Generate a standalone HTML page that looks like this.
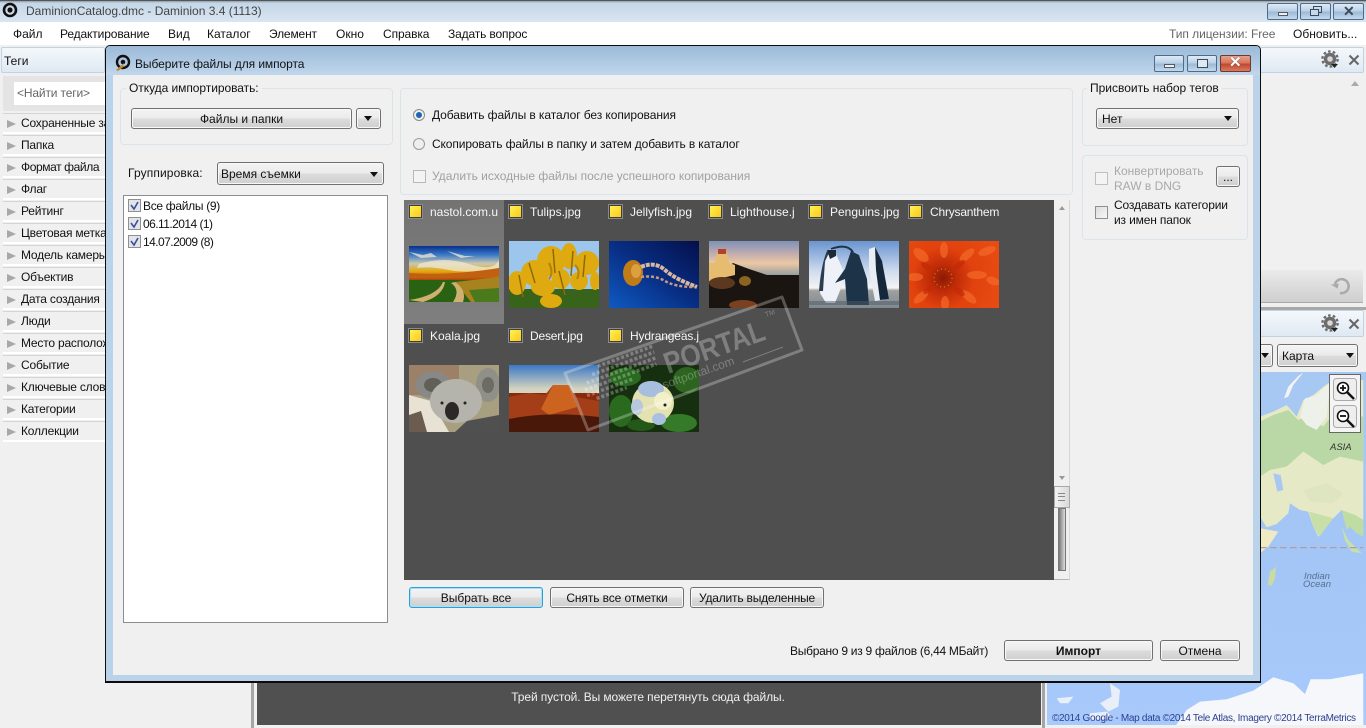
<!DOCTYPE html>
<html lang="ru"><head><meta charset="utf-8"><title>Daminion</title>
<style>
*{box-sizing:border-box}
html,body{margin:0;padding:0;width:1366px;height:728px;overflow:hidden;background:#f0f0f0}
body{position:relative;font:12px "Liberation Sans","Noto Sans CJK SC",sans-serif;color:#111}
.a,.t,.b,.g,.cb{position:absolute}
.t{white-space:nowrap;line-height:16px}
.l{letter-spacing:-.2px;left:21px}
.b{border:1px solid #707070;border-radius:3px;background:linear-gradient(#f4f4f4 0,#ebebeb 48%,#dcdcdc 52%,#cfcfcf 100%);text-align:center;line-height:20px;box-shadow:inset 0 0 0 1px #f8f8f8;white-space:nowrap}
.g{border:1px solid #dbe4ea;border-radius:4px}
.ar{position:absolute;width:0;height:0;border-left:4.5px solid transparent;border-right:4.5px solid transparent;border-top:5px solid #111}
.cb{width:13px;height:13px;border:1px solid #8e8f8f;background:linear-gradient(135deg,#dcdcdc,#f8f8f8)}
.side{position:absolute;left:3px;width:102px;height:21px;border-bottom:2px solid #fff;box-shadow:0 1px 0 #d4d4d4 inset;}
.tri{position:absolute;left:4px;top:7px;width:0;height:0;border-top:4.5px solid transparent;border-bottom:4.5px solid transparent;border-left:9px solid #a8a8a8}
.y{position:absolute;width:15px;height:15px;border:1px solid #8a8a8a;background:#3f3f3f;padding:1px}
.y i{display:block;width:11px;height:11px;background:linear-gradient(135deg,#fff25a,#ffd92e 60%,#f7c82a)}
.wb{position:absolute;height:17px;border:1px solid #4c6c8c;border-radius:2px;background:linear-gradient(#dfeaf5,#b8cfe6 50%,#9bb8d6 52%,#c6d9ec)}
.fn{position:absolute;color:#f6f6f6;line-height:16px;white-space:nowrap;overflow:hidden}
svg{position:absolute;display:block}
</style></head><body>

<!-- main window title -->
<div class="a" style="left:0;top:0;width:1366px;height:22px;background:linear-gradient(#8f9aa6 0,#c4d6e8 2px,#d9e5f1 100%);border-top:1px solid #555"></div>
<svg style="left:2px;top:2px" width="18" height="18" viewBox="0 0 18 18"><circle cx="8" cy="8" r="6" fill="none" stroke="#111" stroke-width="2.6"/><circle cx="8" cy="8" r="2.6" fill="#111"/></svg>
<div class="t" style="left:26px;top:3px;font-size:12px;color:#444">DaminionCatalog.dmc - Daminion 3.4 (1113)</div>
<div class="wb" style="left:1267px;top:3px;width:31px"><div class="a" style="left:10px;top:8px;width:10px;height:4px;background:#eee;border:1px solid #4d5b6b"></div></div>
<div class="wb" style="left:1300px;top:3px;width:31px"><div class="a" style="left:12px;top:2px;width:9px;height:7px;border:1.5px solid #3c4a5a"></div><div class="a" style="left:9px;top:5px;width:9px;height:7px;border:1.5px solid #3c4a5a;background:#c6d9ec"></div></div>
<div class="wb" style="left:1333px;top:3px;width:31px"><div class="t" style="left:9px;top:-1px;font-weight:bold;font-size:14px;color:#3d4b5c">✕</div></div>

<!-- menu -->
<div class="a" style="left:0;top:22px;width:1366px;height:23px;background:#fff"></div>
<div class="t" style="left:13px;top:26px">Файл</div>
<div class="t" style="left:60px;top:26px;letter-spacing:-.13px">Редактирование</div>
<div class="t" style="left:168px;top:26px">Вид</div>
<div class="t" style="left:207px;top:26px">Каталог</div>
<div class="t" style="left:269px;top:26px;letter-spacing:-.15px">Элемент</div>
<div class="t" style="left:336px;top:26px">Окно</div>
<div class="t" style="left:383px;top:26px;letter-spacing:-.1px">Справка</div>
<div class="t" style="left:448px;top:26px;letter-spacing:-.15px">Задать вопрос</div>
<div class="t" style="left:1169px;top:26px;color:#666;letter-spacing:-.05px">Тип лицензии: Free</div>
<div class="t" style="left:1293px;top:26px">Обновить...</div>

<!-- left panel -->
<div class="a" style="left:1px;top:47px;width:104px;height:26px;background:linear-gradient(#f4f8fb,#dfe9f3);border:1px solid #c3d2e1;border-radius:2px"></div>
<div class="t" style="left:4px;top:53px">Теги</div>
<div class="a" style="left:3px;top:76px;width:102px;height:35px;background:#e4e4e4"></div>
<div class="a" style="left:14px;top:82px;width:91px;height:23px;background:#fff"></div>
<div class="t" style="left:17px;top:85px;color:#666;letter-spacing:-.15px">&lt;Найти теги&gt;</div>
<div class="side" style="top:113px"><div class="tri"></div></div><div class="t l" style="top:115px;width:84px;overflow:hidden">Сохраненные запросы</div>
<div class="side" style="top:135px"><div class="tri"></div></div><div class="t l" style="top:137px">Папка</div>
<div class="side" style="top:157px"><div class="tri"></div></div><div class="t l" style="top:159px;letter-spacing:-.4px">Формат файла</div>
<div class="side" style="top:179px"><div class="tri"></div></div><div class="t l" style="top:181px">Флаг</div>
<div class="side" style="top:201px"><div class="tri"></div></div><div class="t l" style="top:203px">Рейтинг</div>
<div class="side" style="top:223px"><div class="tri"></div></div><div class="t l" style="top:225px;width:84px;overflow:hidden">Цветовая метка</div>
<div class="side" style="top:245px"><div class="tri"></div></div><div class="t l" style="top:247px;width:84px;overflow:hidden">Модель камеры</div>
<div class="side" style="top:267px"><div class="tri"></div></div><div class="t l" style="top:269px">Объектив</div>
<div class="side" style="top:289px"><div class="tri"></div></div><div class="t l" style="top:291px">Дата создания</div>
<div class="side" style="top:311px"><div class="tri"></div></div><div class="t l" style="top:313px">Люди</div>
<div class="side" style="top:333px"><div class="tri"></div></div><div class="t l" style="top:335px;width:84px;overflow:hidden">Место расположения</div>
<div class="side" style="top:355px"><div class="tri"></div></div><div class="t l" style="top:357px">Событие</div>
<div class="side" style="top:377px"><div class="tri"></div></div><div class="t l" style="top:379px;width:84px;overflow:hidden">Ключевые слова</div>
<div class="side" style="top:399px"><div class="tri"></div></div><div class="t l" style="top:401px">Категории</div>
<div class="side" style="top:421px"><div class="tri"></div></div><div class="t l" style="top:423px">Коллекции</div>

<!-- bottom center -->
<div class="a" style="left:251px;top:682px;width:3px;height:46px;background:#a5a5a5"></div>
<div class="a" style="left:257px;top:682px;width:784px;height:43px;background:#505050"></div>
<div class="t" style="left:257px;top:689px;width:784px;text-align:center;color:#f0f0f0;letter-spacing:-.1px;padding-right:2px">Трей пустой. Вы можете перетянуть сюда файлы.</div>
<div class="a" style="left:1042px;top:682px;width:3px;height:46px;background:#a5a5a5"></div>

<!-- right top panel -->
<div class="a" style="left:1260px;top:47px;width:104px;height:26px;background:linear-gradient(#f4f8fb,#dfe9f3);border:1px solid #c3d2e1;border-radius:2px"></div>
<svg style="left:1321px;top:50px" width="18" height="19" viewBox="0 0 18 19"><circle cx="9" cy="9" r="6.2" fill="#6c6c6c"/><circle cx="9" cy="9" r="7.6" fill="none" stroke="#6c6c6c" stroke-width="2.4" stroke-dasharray="2.6 2.2"/><circle cx="9" cy="9" r="2.8" fill="#d8d8d8"/><path d="M10 14h7l-3.5 4z" fill="#222"/></svg>
<svg style="left:1348px;top:54px" width="12" height="12" viewBox="0 0 12 12"><path d="M1.5 1.5l9 9M10.5 1.5l-9 9" stroke="#666" stroke-width="2"/></svg>
<div class="a" style="left:1351px;top:81px;width:0;height:0;border-left:4px solid transparent;border-right:4px solid transparent;border-bottom:5px solid #aaa"></div>
<div class="a" style="left:1260px;top:270px;width:103px;height:33px;background:linear-gradient(#eaeaea,#cfcfcf);border-bottom:1px solid #aaa"></div>
<svg style="left:1330px;top:276px" width="22" height="20" viewBox="0 0 22 20"><path d="M5 8a7 7 0 1 1 5 9" fill="none" stroke="#aaa" stroke-width="2.5"/><path d="M1 8h8l-2 5z" fill="#aaa" transform="rotate(-8 5 9)"/></svg>
<div class="a" style="left:1260px;top:307px;width:106px;height:3px;background:#a8a8a8"></div>
<div class="a" style="left:1260px;top:310px;width:104px;height:27px;background:linear-gradient(#f4f8fb,#dfe9f3);border:1px solid #c3d2e1;border-radius:2px"></div>
<svg style="left:1321px;top:314px" width="18" height="19" viewBox="0 0 18 19"><circle cx="9" cy="9" r="6.2" fill="#6c6c6c"/><circle cx="9" cy="9" r="7.6" fill="none" stroke="#6c6c6c" stroke-width="2.4" stroke-dasharray="2.6 2.2"/><circle cx="9" cy="9" r="2.8" fill="#d8d8d8"/><path d="M10 14h7l-3.5 4z" fill="#222"/></svg>
<svg style="left:1348px;top:318px" width="12" height="12" viewBox="0 0 12 12"><path d="M1.5 1.5l9 9M10.5 1.5l-9 9" stroke="#666" stroke-width="2"/></svg>
<div class="b" style="left:1240px;top:344px;width:33px;height:23px"><div class="ar" style="left:20px;top:8px"></div></div>
<div class="b" style="left:1277px;top:344px;width:81px;height:23px;text-align:left;padding-left:4px;line-height:23px">Карта<div class="ar" style="left:68px;top:8px"></div></div>

<!-- map -->
<svg style="left:1047px;top:372px" width="319" height="356" viewBox="1047 372 319 356">
<defs><linearGradient id="sea" x1="0" y1="0" x2="0" y2="1"><stop offset="0" stop-color="#a6c8f2"/><stop offset=".5" stop-color="#a3c6f6"/><stop offset="1" stop-color="#a8c9fb"/></linearGradient></defs>
<rect x="1047" y="372" width="319" height="356" fill="url(#sea)"/>
<g transform="translate(1040 270) scale(.3333)">
<path d="M660 440L700 425 740 405 770 440 790 390 820 375 850 350 880 330H970V750L945 735 920 745 905 720 880 745 860 762 835 800 820 770 805 725 780 720 750 700 745 730 710 762 680 772 660 740Z" fill="#e6e9c6"/>
<path d="M660 455L700 435 745 420 775 450 800 440 850 470 880 430 970 440V575L900 560 850 585 790 545 740 590 690 600 660 620Z" fill="#bad8a6"/>
<path d="M780 440L795 385 825 378 850 355 870 340 860 440 830 480 800 465Z" fill="#eef0ea"/>
<path d="M732 385L745 350 775 318 790 308 760 345 745 380Z" fill="#f2f3f2"/>
<path d="M700 610L722 615 730 660 712 665Z" fill="#a8c8f2"/>
<path d="M790 660L860 640 910 670 880 700 810 695Z" fill="#dfe5c0"/>
<path d="M905 720L945 735 970 750V800L950 790 930 770 920 780Z" fill="#bfdda2"/>
<path d="M808 725L880 745 838 800 820 770Z" fill="#c8e0a8"/>
<path d="M660 775L715 785 685 830 660 850Z" fill="#efe9c4"/>
<path d="M905 770L925 810 965 850 935 845 915 810Z" fill="#c8e0a8"/>
<path d="M683 945L690 905 708 890 705 925 695 948Z" fill="#c9dba2"/>
<path d="M660 833H970" stroke="#b29ca2" stroke-width="4" stroke-dasharray="20 10"/>
<path d="M405 1370L440 1320 480 1295 560 1288 640 1262 700 1222 760 1240 795 1272 812 1228 870 1228 970 1210V1370Z" fill="#f5f7fa"/>
<path d="M210 1240L240 1260 235 1310 205 1325 180 1300 215 1280ZM50 1285L100 1280 85 1300 60 1300ZM150 1330L200 1325 220 1345 150 1350Z" fill="#e8eff9"/>
</g>
<text x="1330" y="450" font-family="Liberation Sans" font-size="9.5" font-style="italic" fill="#333">ASIA</text>
<text x="1304" y="579" font-family="Liberation Sans" font-size="9.5" font-style="italic" fill="#56708f">Indian</text>
<text x="1303" y="587" font-family="Liberation Sans" font-size="9.5" font-style="italic" fill="#56708f">Ocean</text>
<text x="1052" y="721" font-family="Liberation Sans" font-size="10" fill="#2c3f8f" textLength="304">©2014 Google - Map data ©2014 Tele Atlas, Imagery ©2014 TerraMetrics</text>
</svg>
<div class="a" style="left:1047px;top:725px;width:319px;height:3px;background:#f0f0f0"></div>
<div class="a" style="left:1329px;top:374px;width:32px;height:59px;background:#f4f4f4;border:1px solid #666"></div>
<svg style="left:1333px;top:378px" width="25" height="52" viewBox="0 0 25 52"><rect x=".5" y=".5" width="23" height="22" rx="3" fill="#eee" stroke="#aaa"/><rect x=".5" y="27.5" width="23" height="22" rx="3" fill="#eee" stroke="#aaa"/><circle cx="10" cy="10" r="5.5" fill="#fff" stroke="#111" stroke-width="1.6"/><path d="M14 14l7 7" stroke="#111" stroke-width="2.4"/><path d="M7 10h6M10 7v6" stroke="#111" stroke-width="1.8"/><circle cx="10" cy="38" r="5.5" fill="#fff" stroke="#111" stroke-width="1.6"/><path d="M14 42l7 7" stroke="#111" stroke-width="2.4"/><path d="M7 38h6" stroke="#111" stroke-width="1.8"/></svg>

<!-- dialog -->
<div class="a" style="left:105px;top:45px;width:1156px;height:638px;background:#bad2ea;border:1px solid #0c0c0c;border-radius:5px 5px 0 0;border-bottom-width:2px"></div>
<div class="a" style="left:106px;top:46px;width:1154px;height:29px;background:linear-gradient(#9cbad6,#a9c5e0 40%,#c0d6ec);border-radius:4px 4px 0 0"></div>
<div class="a" style="left:113px;top:75px;width:1140px;height:600px;background:#f0f0f0"></div>
<svg style="left:114px;top:54px" width="18" height="18" viewBox="0 0 18 18"><circle cx="9" cy="8" r="6" fill="none" stroke="#111" stroke-width="2.4"/><circle cx="9" cy="8" r="2.3" fill="#111"/><path d="M2 16l8-7-1 3 3-1-8 6z" fill="#c28a2c"/></svg>
<div class="t" style="left:135px;top:56px;color:#111;letter-spacing:-.08px">Выберите файлы для импорта</div>
<div class="wb" style="left:1154px;top:55px;width:30px"><div class="a" style="left:9px;top:8px;width:11px;height:4px;background:#eee;border:1px solid #4d5b6b"></div></div>
<div class="wb" style="left:1187px;top:55px;width:30px"><div class="a" style="left:9px;top:3px;width:11px;height:9px;border:1.5px solid #3c4a5a;background:#dde8f3"></div></div>
<div class="wb" style="left:1220px;top:55px;width:31px;background:linear-gradient(#e9a08a,#d8765c 45%,#c24a2e 55%,#d87a60);border-color:#6b3a30"><div class="t" style="left:8px;top:-1px;font-weight:bold;font-size:15px;color:#fff;text-shadow:0 0 1px #333">✕</div></div>

<!-- source group -->
<div class="g" style="left:120px;top:88px;width:273px;height:57px"></div>
<div class="t" style="left:126px;top:80px;background:#f0f0f0;padding:0 3px;letter-spacing:-.05px">Откуда импортировать:</div>
<div class="b" style="left:131px;top:108px;width:221px;height:21px">Файлы и папки</div>
<div class="b" style="left:356px;top:108px;width:25px;height:21px"><div class="ar" style="left:7px;top:7px"></div></div>
<div class="t" style="left:128px;top:165px;letter-spacing:.12px">Группировка:</div>
<div class="b" style="left:217px;top:162px;width:167px;height:23px;text-align:left;padding-left:3px;line-height:23px">Время съемки<div class="ar" style="left:152px;top:9px"></div></div>

<!-- tree -->
<div class="a" style="left:123px;top:195px;width:265px;height:428px;background:#fff;border:1px solid #8a8e94"></div>
<svg style="left:128px;top:199px" width="14" height="52" viewBox="0 0 14 52"><g fill="#e2e4ea" stroke="#8e8f8f"><rect x=".5" y=".5" width="12" height="12"/><rect x=".5" y="18.5" width="12" height="12"/><rect x=".5" y="36.5" width="12" height="12"/></g><g fill="none" stroke="#3b4f9b" stroke-width="1.6"><path d="M3 6l3 4 4-7"/><path d="M3 24l3 4 4-7"/><path d="M3 42l3 4 4-7"/></g></svg>
<div class="t" style="left:143px;top:198px;letter-spacing:-.3px">Все файлы (9)</div>
<div class="t" style="left:143px;top:216px;letter-spacing:-.55px">06.11.2014 (1)</div>
<div class="t" style="left:143px;top:234px;letter-spacing:-.55px">14.07.2009 (8)</div>

<!-- options group -->
<div class="g" style="left:400px;top:88px;width:673px;height:107px"></div>
<svg style="left:412px;top:108px" width="14" height="44" viewBox="0 0 14 44"><circle cx="7" cy="7" r="5.5" fill="#eee" stroke="#8b8b8b"/><circle cx="7" cy="7" r="3" fill="#1e64b4"/><circle cx="7" cy="36" r="5.5" fill="#eee" stroke="#9a9a9a"/></svg>
<div class="t" style="left:432px;top:107px;letter-spacing:-.08px">Добавить файлы в каталог без копирования</div>
<div class="t" style="left:432px;top:136px;letter-spacing:-.12px">Скопировать файлы в папку и затем добавить в каталог</div>
<div class="cb" style="left:413px;top:170px;background:#f4f4f4;border-color:#b8b8b8"></div>
<div class="t" style="left:432px;top:168px;color:#a0a0a0">Удалить исходные файлы после успешного копирования</div>

<!-- right groups -->
<div class="g" style="left:1082px;top:88px;width:166px;height:58px"></div>
<div class="t" style="left:1087px;top:80px;background:#f0f0f0;padding:0 3px">Присвоить набор тегов</div>
<div class="b" style="left:1096px;top:108px;width:143px;height:21px;text-align:left;padding-left:5px">Нет<div class="ar" style="left:127px;top:7px"></div></div>
<div class="g" style="left:1082px;top:155px;width:166px;height:85px"></div>
<div class="cb" style="left:1095px;top:172px;background:#f4f4f4;border-color:#c0c0c0"></div>
<div class="t" style="left:1114px;top:163px;color:#a8a8a8">Конвертировать</div>
<div class="t" style="left:1114px;top:178px;color:#a8a8a8">RAW в DNG</div>
<div class="b" style="left:1216px;top:166px;width:24px;height:21px;line-height:21px">...</div>
<div class="cb" style="left:1095px;top:206px"></div>
<div class="t" style="left:1114px;top:197px;letter-spacing:-.15px">Создавать категории</div>
<div class="t" style="left:1114px;top:212px;letter-spacing:-.15px">из имен папок</div>

<!-- dark grid -->
<div class="a" style="left:404px;top:200px;width:650px;height:380px;background:#4f4f4f"></div>
<div class="a" style="left:404px;top:200px;width:100px;height:124px;background:linear-gradient(#737373,#7f7f7f)"></div>

<div class="y" style="left:408px;top:204px"><i></i></div><div class="fn" style="left:430px;top:204px;width:70px">nastol.com.u</div>
<div class="y" style="left:508px;top:204px"><i></i></div><div class="fn" style="left:530px;top:204px;width:70px">Tulips.jpg</div>
<div class="y" style="left:608px;top:204px"><i></i></div><div class="fn" style="left:630px;top:204px;width:70px">Jellyfish.jpg</div>
<div class="y" style="left:708px;top:204px"><i></i></div><div class="fn" style="left:730px;top:204px;width:70px">Lighthouse.j</div>
<div class="y" style="left:808px;top:204px"><i></i></div><div class="fn" style="left:830px;top:204px;width:70px">Penguins.jpg</div>
<div class="y" style="left:908px;top:204px"><i></i></div><div class="fn" style="left:930px;top:204px;width:72px;letter-spacing:-.2px">Chrysanthem</div>
<div class="y" style="left:408px;top:328px"><i></i></div><div class="fn" style="left:430px;top:328px;width:70px">Koala.jpg</div>
<div class="y" style="left:508px;top:328px"><i></i></div><div class="fn" style="left:530px;top:328px;width:70px;letter-spacing:-.2px">Desert.jpg</div>
<div class="y" style="left:608px;top:328px"><i></i></div><div class="fn" style="left:630px;top:328px;width:70px;letter-spacing:-.15px">Hydrangeas.j</div>

<!-- thumbnails -->
<svg style="left:409px;top:246px" width="90" height="56" viewBox="0 0 90 56"><defs><linearGradient id="s1" x1="0" y1="0" x2="0" y2="1"><stop offset="0" stop-color="#08308c"/><stop offset=".25" stop-color="#3a78c8"/><stop offset=".5" stop-color="#c8c8b0"/><stop offset=".72" stop-color="#e4a810"/><stop offset="1" stop-color="#a83808"/></linearGradient></defs><rect width="90" height="35" fill="url(#s1)"/><path d="M0 6l14 3 8-2 6 4-16 1zM38 5l18 5 10 0-14 2zM10 18q25-8 50 0t30-4v8q-30 6-50 2T8 22z" fill="#f0ead0" opacity=".75"/><path d="M0 27Q40 30 90 22V30Q40 33 0 32Z" fill="#c06010"/><rect y="34" width="90" height="22" fill="#2a6214"/><path d="M46 36L90 31V56H62z" fill="#a8821e"/><path d="M60 44L90 42V56H66Z" fill="#4a7a1c"/><path d="M0 54Q28 50 34 36L36 36Q34 50 14 56ZM44 56Q52 44 42 37L46 36Q58 44 54 56Z" fill="#d0b070"/></svg>

<svg style="left:509px;top:241px" width="90" height="67" viewBox="0 0 90 67"><rect width="90" height="67" fill="#9cc6ec"/><rect y="48" width="90" height="19" fill="#37641a"/><g fill="#deaa10"><ellipse cx="42" cy="20" rx="14" ry="15"/><ellipse cx="60" cy="15" rx="8" ry="13"/><ellipse cx="78" cy="22" rx="12" ry="12"/><ellipse cx="26" cy="32" rx="14" ry="13"/><ellipse cx="8" cy="42" rx="9" ry="12"/><ellipse cx="34" cy="46" rx="12" ry="9"/><ellipse cx="70" cy="40" rx="9" ry="9"/><ellipse cx="86" cy="40" rx="5" ry="9"/><ellipse cx="52" cy="38" rx="9" ry="10"/><ellipse cx="42" cy="60" rx="11" ry="7"/></g><path d="M44 8l2 24M20 22l6 20M64 10l-2 25M50 30l6 24M10 34l4 22M76 14l-2 22" stroke="#926806" stroke-width="1.5" fill="none"/><path d="M40 22q5 10 0 16M66 24q6 6 2 14" stroke="#b48208" stroke-width="2" fill="none"/></svg>

<svg style="left:609px;top:241px" width="90" height="67" viewBox="0 0 90 67"><defs><linearGradient id="j" x1="0" y1="1" x2="1" y2="0"><stop offset="0" stop-color="#0f5ac2"/><stop offset=".5" stop-color="#082e84"/><stop offset="1" stop-color="#050f4a"/></linearGradient></defs><rect width="90" height="67" fill="url(#j)"/><ellipse cx="24" cy="32" rx="10" ry="13" fill="#c07c18"/><ellipse cx="27" cy="30" rx="5" ry="7" fill="#dda040"/><path d="M32 26q14-6 24 3t32 17" stroke="#d8b8a0" stroke-width="4" fill="none" stroke-dasharray="4 1"/><path d="M32 36q14-2 24 4t30 6" stroke="#c89880" stroke-width="2.5" fill="none" stroke-dasharray="3 2"/></svg>

<svg style="left:709px;top:241px" width="90" height="67" viewBox="0 0 90 67"><defs><linearGradient id="l" x1="0" y1="0" x2="0" y2="1"><stop offset="0" stop-color="#7e92b8"/><stop offset=".3" stop-color="#b8a8b0"/><stop offset=".62" stop-color="#ecc8a4"/><stop offset="1" stop-color="#8898a0"/></linearGradient></defs><rect width="90" height="36" fill="url(#l)"/><path d="M0 42L24 22 40 28 58 34 90 34V67H0Z" fill="#1a1510"/><path d="M0 22H6L8 12 18 12 20 22 26 24V34L0 40Z" fill="#e6bc70"/><rect x="9" y="8" width="8" height="5" fill="#b4402c"/><ellipse cx="13" cy="42" rx="13" ry="6" fill="#5c3820"/><ellipse cx="36" cy="40" rx="6" ry="5" fill="#8a6420"/><ellipse cx="34" cy="64" rx="14" ry="5" fill="#7a4020"/></svg>

<svg style="left:809px;top:241px" width="90" height="67" viewBox="0 0 90 67"><defs><linearGradient id="p" x1="0" y1="0" x2="0" y2="1"><stop offset="0" stop-color="#6a94d0"/><stop offset=".45" stop-color="#cfdcee"/><stop offset=".7" stop-color="#f4f4f4"/><stop offset=".74" stop-color="#a0a0a0"/><stop offset="1" stop-color="#7e8a90"/></linearGradient></defs><rect width="90" height="67" fill="url(#p)"/><path d="M20 9q6-2 7 4l7 16-2 18-6 15H17L11 52l3-24z" fill="#eef2f8"/><path d="M18 10q-6 14-8 40l4 0 2-30 4-8z" fill="#2a3c52"/><path d="M18 9h9v6l-6 3z" fill="#1c2a38"/><path d="M22 8q16-6 22 3" stroke="#1c3348" stroke-width="2" fill="none"/><path d="M42 10l8 4 8 24 2 26H38l-2-26-10 4 10-14z" fill="#1c3348"/><path d="M60 8l6-2 6 14 8 38-14 2-6-32z" fill="#e8eef4"/><path d="M66 6l7 14 7 38-9 1-4-30z" fill="#14273b"/><rect y="60" width="90" height="4" fill="#4e5a66" opacity=".5"/></svg>

<svg style="left:909px;top:241px" width="90" height="67" viewBox="0 0 90 67"><defs><radialGradient id="c" gradientUnits="userSpaceOnUse" cx="34" cy="37" r="62"><stop offset="0" stop-color="#8a1a04"/><stop offset=".22" stop-color="#c02c08"/><stop offset=".5" stop-color="#e2420e"/><stop offset="1" stop-color="#e84c12"/></radialGradient></defs><rect width="90" height="67" fill="url(#c)"/><g fill="#f46a2a" opacity=".7"><ellipse cx="12" cy="14" rx="9" ry="5" transform="rotate(40 12 14)"/><ellipse cx="35" cy="9" rx="4" ry="8"/><ellipse cx="58" cy="14" rx="9" ry="4" transform="rotate(-40 58 14)"/><ellipse cx="78" cy="10" rx="9" ry="4" transform="rotate(-20 78 10)"/><ellipse cx="68" cy="34" rx="10" ry="4"/><ellipse cx="84" cy="40" rx="7" ry="4" transform="rotate(20 84 40)"/><ellipse cx="60" cy="56" rx="9" ry="4" transform="rotate(40 60 56)"/><ellipse cx="36" cy="62" rx="4" ry="7"/><ellipse cx="12" cy="56" rx="9" ry="4" transform="rotate(-40 12 56)"/><ellipse cx="6" cy="36" rx="8" ry="4"/></g><g fill="#c42a06" opacity=".7"><ellipse cx="50" cy="24" rx="7" ry="3" transform="rotate(-40 50 24)"/><ellipse cx="18" cy="26" rx="7" ry="3" transform="rotate(35 18 26)"/><ellipse cx="50" cy="50" rx="7" ry="3" transform="rotate(40 50 50)"/><ellipse cx="20" cy="48" rx="7" ry="3" transform="rotate(-40 20 48)"/></g><circle cx="34" cy="37" r="9" fill="none" stroke="#c88420" stroke-width="1.2" stroke-dasharray="1 3"/></svg>

<svg style="left:409px;top:365px" width="90" height="67" viewBox="0 0 90 67"><rect width="90" height="67" fill="#a89e80"/><path d="M0 0H50V30L0 30Z" fill="#9c8068"/><path d="M0 30L22 36 40 67H0Z" fill="#e8e2d4"/><path d="M0 50L12 46 18 67H0Z" fill="#6c5c50"/><path d="M58 56L90 50V67H46Z" fill="#505050"/><ellipse cx="24" cy="20" rx="18" ry="14" fill="#888884"/><ellipse cx="79" cy="20" rx="12" ry="17" fill="#909088"/><ellipse cx="24" cy="20" rx="9" ry="7" fill="#606058"/><ellipse cx="79" cy="20" rx="6" ry="8" fill="#6c6c64"/><ellipse cx="47" cy="36" rx="26" ry="22" fill="#b4b4ac"/><ellipse cx="43" cy="46" rx="7" ry="9" fill="#2c2828"/><circle cx="33" cy="38" r="1.5" fill="#222"/><circle cx="56" cy="38" r="1.5" fill="#222"/></svg>

<svg style="left:509px;top:365px" width="90" height="67" viewBox="0 0 90 67"><defs><linearGradient id="d" x1="0" y1="0" x2="0" y2="1"><stop offset="0" stop-color="#3c78c4"/><stop offset=".8" stop-color="#d4d4c0"/></linearGradient></defs><rect width="90" height="30" fill="url(#d)"/><rect y="28" width="90" height="39" fill="#8a2a0c"/><path d="M0 32L20 28 36 30 44 20 60 20 66 32 90 36V67H0Z" fill="#a43e18"/><path d="M44 20L60 20 68 42 40 50 32 44Z" fill="#cc6420"/><path d="M0 54Q40 46 90 52V67H0Z" fill="#4a1808"/></svg>

<svg style="left:609px;top:365px" width="90" height="67" viewBox="0 0 90 67"><rect width="90" height="67" fill="#16300f"/><ellipse cx="16" cy="12" rx="16" ry="9" fill="#2a6a20"/><ellipse cx="78" cy="15" rx="14" ry="13" fill="#2c6420"/><ellipse cx="12" cy="46" rx="12" ry="16" fill="#2a6a1e"/><ellipse cx="70" cy="58" rx="18" ry="9" fill="#347a28"/><ellipse cx="32" cy="60" rx="14" ry="6" fill="#245818"/><ellipse cx="44" cy="38" rx="21" ry="20" fill="#e4e2b0"/><ellipse cx="42" cy="24" rx="13" ry="8" fill="#a8bede"/><ellipse cx="50" cy="54" rx="7" ry="6" fill="#aac0e0"/><ellipse cx="28" cy="42" rx="6" ry="8" fill="#b8c8dc"/><ellipse cx="54" cy="36" rx="9" ry="9" fill="#f2f0c8"/><circle cx="56" cy="40" r="1.5" fill="#222"/></svg>

<!-- scrollbar -->
<div class="a" style="left:1054px;top:200px;width:16px;height:380px;background:#f0f0f0;border-right:1px solid #d8d8d8;border-bottom:1px solid #b4b4b4"></div>
<div class="a" style="left:1059px;top:206px;width:0;height:0;border-left:3.5px solid transparent;border-right:3.5px solid transparent;border-bottom:4px solid #9a9a9a"></div>
<div class="a" style="left:1059px;top:476px;width:0;height:0;border-left:3.5px solid transparent;border-right:3.5px solid transparent;border-top:4px solid #9a9a9a"></div>
<div class="a" style="left:1054px;top:486px;width:16px;height:22px;background:linear-gradient(90deg,#f4f4f4,#dadada);border:1px solid #a8a8a8"></div>
<div class="a" style="left:1058px;top:493px;width:7px;height:8px;border-top:1px solid #888;border-bottom:1px solid #888"></div>
<div class="a" style="left:1058px;top:496px;width:7px;height:1px;background:#888"></div>
<div class="a" style="left:1058px;top:508px;width:8px;height:63px;background:linear-gradient(90deg,#777,#ddd);border:1px solid #777"></div>

<!-- bottom buttons -->
<div class="b" style="left:409px;top:587px;width:134px;height:21px;border-color:#2c9fd8;box-shadow:inset 0 0 0 1px #a8e0f8">Выбрать все</div>
<div class="b" style="left:550px;top:587px;width:134px;height:21px;letter-spacing:-.1px">Снять все отметки</div>
<div class="b" style="left:690px;top:587px;width:134px;height:21px;letter-spacing:-.2px">Удалить выделенные</div>
<div class="t" style="left:790px;top:643px;letter-spacing:-.27px">Выбрано 9 из 9 файлов (6,44 МБайт)</div>
<div class="b" style="left:1004px;top:640px;width:149px;height:21px;font-weight:bold">Импорт</div>
<div class="b" style="left:1160px;top:640px;width:80px;height:21px">Отмена</div>

<!-- watermark -->
<svg style="left:555px;top:290px" width="260" height="150" viewBox="0 0 260 150">
<g opacity=".27" fill="#fff">
<polygon points="10,83 227,7 247,60 33,140" fill="none" stroke="#fff" stroke-width="3" stroke-linejoin="round"/>
<text transform="translate(113 84) rotate(-19.3)" font-family="Liberation Sans" font-size="30" font-weight="bold" textLength="105" lengthAdjust="spacingAndGlyphs">PORTAL</text>
<text transform="translate(211 27) rotate(-19.3)" font-family="Liberation Sans" font-size="7">TM</text>
<text transform="translate(109 99) rotate(-19.3)" font-family="Liberation Sans" font-size="12">softportal.com</text>
<path d="M188 72L228 57" stroke="#fff" stroke-width="1"/>
<g fill="none" stroke="#fff" stroke-width="3.5" stroke-dasharray="3 2" transform="translate(30 100) rotate(-20)"><path d="M0 0H76M4 -6H78M0 6H50M8 12H40M12 -12H78M20 -18H78"/></g>
</g>
</svg>

</body></html>
